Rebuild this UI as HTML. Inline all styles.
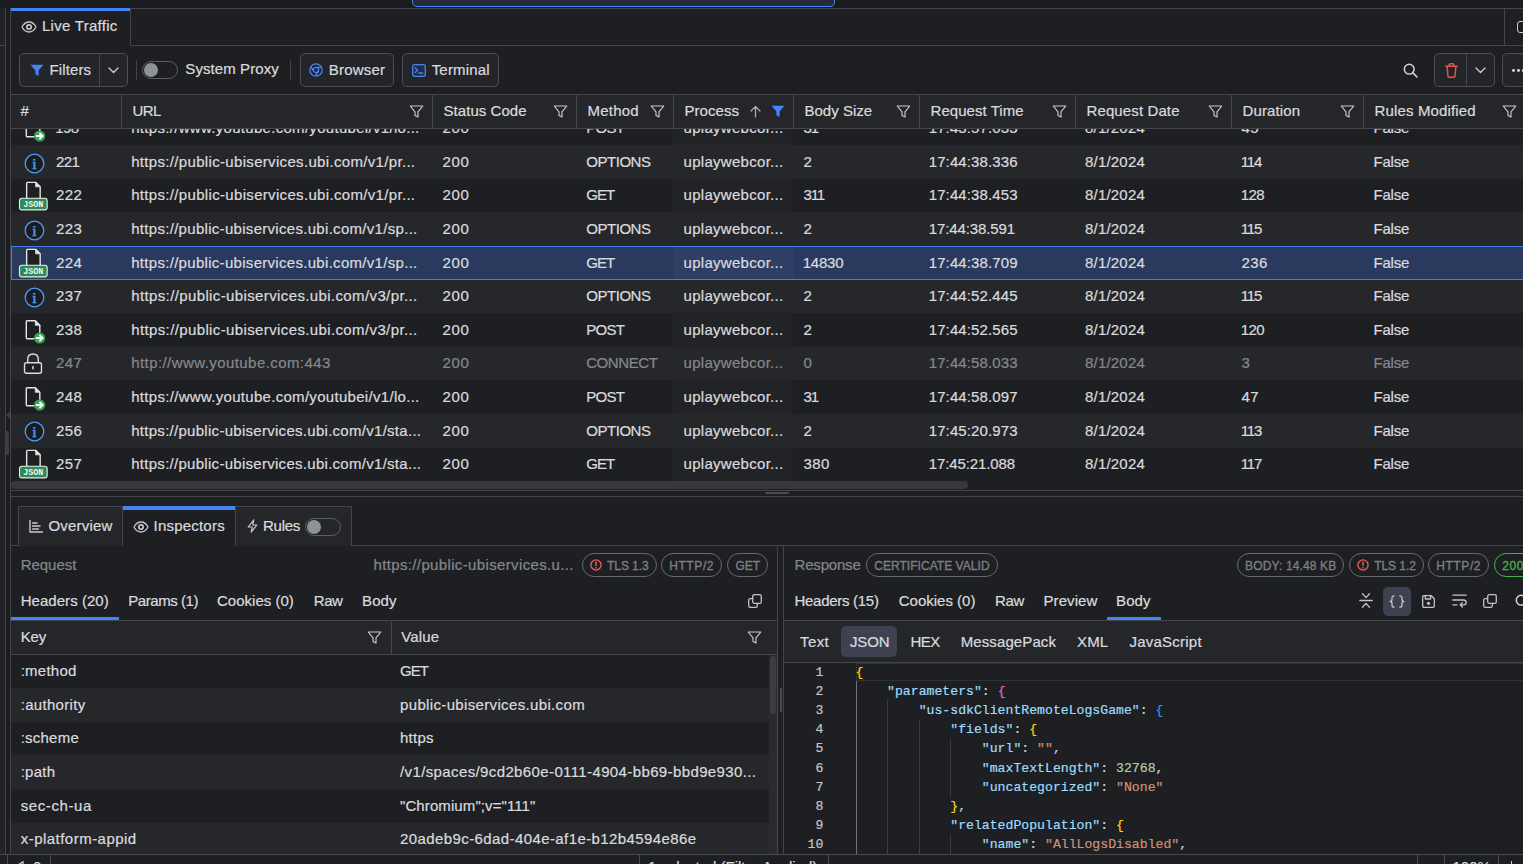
<!DOCTYPE html>
<html lang="en"><head><meta charset="utf-8"><title>Live Traffic</title><style>
html,body{margin:0;padding:0;background:#1e1f22;}
body{width:1523px;height:864px;overflow:hidden;position:relative;font-family:"Liberation Sans",sans-serif;font-size:15px;color:#d9dade;}
div{position:absolute;}
.t{white-space:nowrap;-webkit-text-stroke:0.22px currentColor;}
.m{white-space:pre;font-family:"Liberation Mono",monospace;font-size:13.17px;line-height:20px;color:#d4d4d4;-webkit-text-stroke:0.2px currentColor;}
svg{display:block;overflow:visible}
</style></head>
<body>
<div style="left:0px;top:0px;width:1523px;height:8px;background:#1b1c1f"></div>
<div style="left:412px;top:-6px;width:423px;height:12.5px;background:#262b3b;border:1.5px solid #4484f5;border-radius:0 0 5px 5px;box-sizing:border-box"></div>
<div style="left:0px;top:8px;width:5px;height:856px;background:#222327"></div>
<div style="left:4.5px;top:8px;width:1px;height:864px;background:#44454a"></div>
<div style="left:5.5px;top:8px;width:5px;height:864px;background:#1b1c1f"></div>
<div style="left:10px;top:8px;width:1px;height:864px;background:#44454a"></div>
<div style="left:0px;top:45px;width:5px;height:1px;background:#44454a"></div>
<div style="left:11px;top:8px;width:1523px;height:1px;background:#44454a"></div>
<div style="left:130px;top:45px;width:1523px;height:1px;background:#44454a"></div>
<div style="left:11px;top:8px;width:119px;height:2.6px;background:#4484f5"></div>
<div style="left:130px;top:8px;width:1px;height:38px;background:#44454a"></div>
<div style="left:20.8px;top:19px;line-height:0"><svg width="16" height="16" viewBox="0 0 16 16" ><path d="M1 8 C3 4.2 5.5 3 8 3 C10.5 3 13 4.2 15 8 C13 11.8 10.5 13 8 13 C5.5 13 3 11.8 1 8 Z" fill="none" stroke="#c3c4c8" stroke-width="1.3"/><circle cx="8" cy="8" r="2.2" fill="none" stroke="#c3c4c8" stroke-width="1.7"/></svg></div>
<div class="t" style="left:42px;top:16.00px;line-height:20px;font-size:15px;color:#d9dade;letter-spacing:0.278px;">Live Traffic</div>
<div style="left:1504px;top:9px;width:1px;height:36px;background:#44454a"></div>
<div style="left:1517.3px;top:20.6px;width:22px;height:12.8px;border:1.5px solid #c9cacd;border-radius:3px;box-sizing:border-box"></div>
<div style="left:19px;top:53px;width:109px;height:34px;border:1px solid #4d4f55;border-radius:5px;box-sizing:border-box;background:#242529"></div>
<div style="left:99px;top:54px;width:1px;height:32px;background:#44454a"></div>
<div style="left:29.6px;top:64px;line-height:0"><svg width="14" height="13" viewBox="0 0 14 13" ><path d="M0.5 0.8 H13.5 L8.6 6.6 V12 L5.4 10.2 V6.6 Z" fill="#4484f5"/></svg></div>
<div class="t" style="left:49.5px;top:59.50px;line-height:20px;font-size:15px;color:#d9dade;letter-spacing:0.108px;">Filters</div>
<div style="left:108px;top:67px;line-height:0"><svg width="11" height="7" viewBox="0 0 11 7" ><path d="M1 1 L5.5 5.5 L10 1" fill="none" stroke="#c9cacd" stroke-width="1.4" stroke-linecap="round" stroke-linejoin="round"/></svg></div>
<div style="left:136px;top:60px;width:1px;height:20px;background:#44454a"></div>
<div style="left:142px;top:61px;width:36px;height:18px;border:1px solid #5b5d64;border-radius:9px;box-sizing:border-box"></div>
<div style="left:144px;top:63px;width:14px;height:14px;background:#8f9198;border-radius:7px"></div>
<div class="t" style="left:185.3px;top:58.50px;line-height:20px;font-size:15px;color:#d9dade;letter-spacing:0.089px;">System Proxy</div>
<div style="left:290px;top:60px;width:1px;height:20px;background:#44454a"></div>
<div style="left:300px;top:53px;width:94px;height:34px;border:1px solid #4d4f55;border-radius:5px;box-sizing:border-box;background:#242529"></div>
<div style="left:309px;top:63px;line-height:0"><svg width="14" height="14" viewBox="0 0 14 14" ><circle cx="7" cy="7" r="6.2" fill="none" stroke="#4484f5" stroke-width="1.3"/><circle cx="7" cy="7" r="2.6" fill="none" stroke="#4484f5" stroke-width="1.3"/><path d="M7 4.4 H12.6 M4.75 8.3 L2 3.6 M9.25 8.3 L6.5 13" fill="none" stroke="#4484f5" stroke-width="1.3"/></svg></div>
<div class="t" style="left:328.7px;top:59.50px;line-height:20px;font-size:15px;color:#d9dade;letter-spacing:0.226px;">Browser</div>
<div style="left:402px;top:53px;width:97px;height:34px;border:1px solid #4d4f55;border-radius:5px;box-sizing:border-box;background:#242529"></div>
<div style="left:412px;top:63.5px;line-height:0"><svg width="14" height="13" viewBox="0 0 14 13" ><rect x="0.7" y="0.7" width="12.6" height="11.6" rx="2" fill="#222c47" stroke="#4484f5" stroke-width="1.3"/><path d="M3.2 4 L5.6 6.2 L3.2 8.4 M6.8 9 H10.6" fill="none" stroke="#4484f5" stroke-width="1.3" stroke-linecap="round" stroke-linejoin="round"/></svg></div>
<div class="t" style="left:431.7px;top:59.50px;line-height:20px;font-size:15px;color:#d9dade;letter-spacing:0.177px;">Terminal</div>
<div style="left:1402.6px;top:62.6px;line-height:0"><svg width="15" height="15" viewBox="0 0 15 15" ><circle cx="6.2" cy="6.2" r="4.9" fill="none" stroke="#d5d6d9" stroke-width="1.5"/><path d="M9.9 9.9 L14 14" stroke="#d5d6d9" stroke-width="1.6" stroke-linecap="round"/></svg></div>
<div style="left:1434px;top:53px;width:61px;height:34px;border:1px solid #4d4f55;border-radius:5px;box-sizing:border-box;background:#242529"></div>
<div style="left:1466px;top:54px;width:1px;height:32px;background:#44454a"></div>
<div style="left:1445px;top:63px;line-height:0"><svg width="13" height="15" viewBox="0 0 13 15" ><path d="M0.8 3.2 H12.2 M4.3 3 V1.6 Q4.3 0.8 5.1 0.8 H7.9 Q8.7 0.8 8.7 1.6 V3 M2.2 3.4 L2.9 13 Q3 14.2 4.1 14.2 H8.9 Q10 14.2 10.1 13 L10.8 3.4" fill="none" stroke="#e5534b" stroke-width="1.5" stroke-linecap="round" stroke-linejoin="round"/></svg></div>
<div style="left:1474.5px;top:66.5px;line-height:0"><svg width="11" height="7" viewBox="0 0 11 7" ><path d="M1 1 L5.5 5.5 L10 1" fill="none" stroke="#c9cacd" stroke-width="1.4" stroke-linecap="round" stroke-linejoin="round"/></svg></div>
<div style="left:1502px;top:53px;width:40px;height:34px;border:1px solid #4d4f55;border-radius:5px;box-sizing:border-box;background:#242529"></div>
<div style="left:1512.3px;top:68.7px;width:2.9px;height:2.9px;background:#d5d6d9;border-radius:50%"></div>
<div style="left:1516.8999999999999px;top:68.7px;width:2.9px;height:2.9px;background:#d5d6d9;border-radius:50%"></div>
<div style="left:1521.5px;top:68.7px;width:2.9px;height:2.9px;background:#d5d6d9;border-radius:50%"></div>
<div style="left:11px;top:94px;width:1523px;height:34px;background:#25262a"></div>
<div style="left:11px;top:94px;width:1523px;height:1px;background:#45464b"></div>
<div style="left:11px;top:128px;width:1523px;height:1px;background:#45464b"></div>
<div style="left:11px;top:128.5px;width:1523px;height:352px;overflow:hidden"><div style="left:-11px;top:-128.5px;width:1523px;height:900px">
<div style="left:11px;top:111.6px;width:1523px;height:33.6px;background:#1e1f22"></div>
<div style="left:673px;top:111.6px;width:120px;height:33.6px;background:#222327"></div>
<div style="left:24.7px;top:118.2px;line-height:0"><svg width="24" height="26" viewBox="0 0 24 26" ><path d="M1.3 1.6 Q1.3 0.8 2.1 0.8 H10.3 L14.8 5.3 V17.8 Q14.8 18.8 13.8 18.8 H2.1 Q1.3 18.8 1.3 17.8 Z" fill="#1f1f20" stroke="#e4e4e4" stroke-width="1.4" stroke-linejoin="round"/><path d="M10.3 0.8 V5.3 H14.8 Z" fill="#e4e4e4" stroke="#e4e4e4" stroke-width="0.8" stroke-linejoin="round"/><circle cx="14.6" cy="18" r="5.6" fill="#35a853"/><path d="M11.6 18 H17.2 M15 15.5 L17.6 18 L15 20.5" fill="none" stroke="#fff" stroke-width="1.9" stroke-linecap="round" stroke-linejoin="round"/></svg></div>
<div class="t" style="left:55.2px;top:118.20px;line-height:20px;font-size:15px;color:#d9dade;letter-spacing:-0.577px;">198</div>
<div class="t" style="left:131.2px;top:118.20px;line-height:20px;font-size:15px;color:#d9dade;letter-spacing:0.303px;">https://www.youtube.com/youtubei/v1/lo...</div>
<div class="t" style="left:442.5px;top:118.20px;line-height:20px;font-size:15px;color:#d9dade;letter-spacing:0.606px;">200</div>
<div class="t" style="left:586.2px;top:118.20px;line-height:20px;font-size:15px;color:#d9dade;letter-spacing:-0.686px;">POST</div>
<div class="t" style="left:683.5px;top:118.20px;line-height:20px;font-size:15px;color:#d9dade;letter-spacing:0.294px;">uplaywebcor...</div>
<div class="t" style="left:803.5px;top:118.20px;line-height:20px;font-size:15px;color:#d9dade;letter-spacing:-1.044px;">31</div>
<div class="t" style="left:928.7px;top:118.20px;line-height:20px;font-size:15px;color:#d9dade;letter-spacing:0.117px;">17:43:57.033</div>
<div class="t" style="left:1085px;top:118.20px;line-height:20px;font-size:15px;color:#d9dade;letter-spacing:0.201px;">8/1/2024</div>
<div class="t" style="left:1241.5px;top:118.20px;line-height:20px;font-size:15px;color:#d9dade;letter-spacing:0.356px;">45</div>
<div class="t" style="left:1373.5px;top:118.20px;line-height:20px;font-size:15px;color:#d9dade;letter-spacing:-0.217px;">False</div>
<div style="left:11px;top:145.2px;width:1523px;height:33.6px;background:#26272b"></div>
<div style="left:673px;top:145.2px;width:120px;height:33.6px;background:#26272b"></div>
<div style="left:23.6px;top:152.5px;line-height:0"><svg width="21" height="21" viewBox="0 0 21 21" ><circle cx="10.5" cy="10.5" r="9.3" fill="#1c1c1e" stroke="#4a9df8" stroke-width="1.3"/><text x="10.5" y="15.6" text-anchor="middle" font-family="Liberation Serif, DejaVu Serif, serif" font-size="15.5" fill="#4a9df8" stroke="#4a9df8" stroke-width="0.55">i</text></svg></div>
<div class="t" style="left:56px;top:151.80px;line-height:20px;font-size:15px;color:#d9dade;letter-spacing:-0.577px;">221</div>
<div class="t" style="left:131.2px;top:151.80px;line-height:20px;font-size:15px;color:#d9dade;letter-spacing:0.327px;">https://public-ubiservices.ubi.com/v1/pr...</div>
<div class="t" style="left:442.5px;top:151.80px;line-height:20px;font-size:15px;color:#d9dade;letter-spacing:0.606px;">200</div>
<div class="t" style="left:586.2px;top:151.80px;line-height:20px;font-size:15px;color:#d9dade;letter-spacing:-0.452px;">OPTIONS</div>
<div class="t" style="left:683.5px;top:151.80px;line-height:20px;font-size:15px;color:#d9dade;letter-spacing:0.294px;">uplaywebcor...</div>
<div class="t" style="left:803.5px;top:151.80px;line-height:20px;font-size:15px;color:#d9dade;letter-spacing:0.356px;">2</div>
<div class="t" style="left:928.7px;top:151.80px;line-height:20px;font-size:15px;color:#d9dade;letter-spacing:0.117px;">17:44:38.336</div>
<div class="t" style="left:1085px;top:151.80px;line-height:20px;font-size:15px;color:#d9dade;letter-spacing:0.201px;">8/1/2024</div>
<div class="t" style="left:1240.7px;top:151.80px;line-height:20px;font-size:15px;color:#d9dade;letter-spacing:-1.141px;">114</div>
<div class="t" style="left:1373.5px;top:151.80px;line-height:20px;font-size:15px;color:#d9dade;letter-spacing:-0.217px;">False</div>
<div style="left:11px;top:178.8px;width:1523px;height:33.6px;background:#1e1f22"></div>
<div style="left:673px;top:178.8px;width:120px;height:33.6px;background:#222327"></div>
<div style="left:18.3px;top:180.6px;line-height:0"><svg width="31" height="31" viewBox="0 0 31 31" ><path d="M8.65 2.15 Q8.65 1.35 9.450000000000001 1.35 H17.65 L22.15 5.85 V18.35 Q22.15 19.35 21.15 19.35 H9.450000000000001 Q8.65 19.35 8.65 18.35 Z" fill="#1f1f20" stroke="#e4e4e4" stroke-width="1.4" stroke-linejoin="round"/><path d="M17.65 1.35 V5.85 H22.15 Z" fill="#e4e4e4" stroke="#e4e4e4" stroke-width="0.8" stroke-linejoin="round"/><rect x="1.5" y="17.25" width="27.65" height="11.6" rx="2.4" fill="#2e8b57" stroke="#e9efe9" stroke-width="1.1"/><text x="15.3" y="25.7" text-anchor="middle" font-family="Liberation Mono, DejaVu Sans Mono, monospace" font-weight="bold" font-size="8.4" fill="#f4f4f4">JSON</text></svg></div>
<div class="t" style="left:56px;top:185.40px;line-height:20px;font-size:15px;color:#d9dade;letter-spacing:0.356px;">222</div>
<div class="t" style="left:131.2px;top:185.40px;line-height:20px;font-size:15px;color:#d9dade;letter-spacing:0.327px;">https://public-ubiservices.ubi.com/v1/pr...</div>
<div class="t" style="left:442.5px;top:185.40px;line-height:20px;font-size:15px;color:#d9dade;letter-spacing:0.606px;">200</div>
<div class="t" style="left:586.2px;top:185.40px;line-height:20px;font-size:15px;color:#d9dade;letter-spacing:-0.915px;">GET</div>
<div class="t" style="left:683.5px;top:185.40px;line-height:20px;font-size:15px;color:#d9dade;letter-spacing:0.294px;">uplaywebcor...</div>
<div class="t" style="left:803.5px;top:185.40px;line-height:20px;font-size:15px;color:#d9dade;letter-spacing:-1.141px;">311</div>
<div class="t" style="left:928.7px;top:185.40px;line-height:20px;font-size:15px;color:#d9dade;letter-spacing:0.117px;">17:44:38.453</div>
<div class="t" style="left:1085px;top:185.40px;line-height:20px;font-size:15px;color:#d9dade;letter-spacing:0.201px;">8/1/2024</div>
<div class="t" style="left:1240.7px;top:185.40px;line-height:20px;font-size:15px;color:#d9dade;letter-spacing:-0.577px;">128</div>
<div class="t" style="left:1373.5px;top:185.40px;line-height:20px;font-size:15px;color:#d9dade;letter-spacing:-0.217px;">False</div>
<div style="left:11px;top:212.4px;width:1523px;height:33.6px;background:#26272b"></div>
<div style="left:673px;top:212.4px;width:120px;height:33.6px;background:#26272b"></div>
<div style="left:23.6px;top:219.7px;line-height:0"><svg width="21" height="21" viewBox="0 0 21 21" ><circle cx="10.5" cy="10.5" r="9.3" fill="#1c1c1e" stroke="#4a9df8" stroke-width="1.3"/><text x="10.5" y="15.6" text-anchor="middle" font-family="Liberation Serif, DejaVu Serif, serif" font-size="15.5" fill="#4a9df8" stroke="#4a9df8" stroke-width="0.55">i</text></svg></div>
<div class="t" style="left:56px;top:219.00px;line-height:20px;font-size:15px;color:#d9dade;letter-spacing:0.356px;">223</div>
<div class="t" style="left:131.2px;top:219.00px;line-height:20px;font-size:15px;color:#d9dade;letter-spacing:0.301px;">https://public-ubiservices.ubi.com/v1/sp...</div>
<div class="t" style="left:442.5px;top:219.00px;line-height:20px;font-size:15px;color:#d9dade;letter-spacing:0.606px;">200</div>
<div class="t" style="left:586.2px;top:219.00px;line-height:20px;font-size:15px;color:#d9dade;letter-spacing:-0.452px;">OPTIONS</div>
<div class="t" style="left:683.5px;top:219.00px;line-height:20px;font-size:15px;color:#d9dade;letter-spacing:0.294px;">uplaywebcor...</div>
<div class="t" style="left:803.5px;top:219.00px;line-height:20px;font-size:15px;color:#d9dade;letter-spacing:0.356px;">2</div>
<div class="t" style="left:928.7px;top:219.00px;line-height:20px;font-size:15px;color:#d9dade;letter-spacing:-0.116px;">17:44:38.591</div>
<div class="t" style="left:1085px;top:219.00px;line-height:20px;font-size:15px;color:#d9dade;letter-spacing:0.201px;">8/1/2024</div>
<div class="t" style="left:1240.7px;top:219.00px;line-height:20px;font-size:15px;color:#d9dade;letter-spacing:-1.141px;">115</div>
<div class="t" style="left:1373.5px;top:219.00px;line-height:20px;font-size:15px;color:#d9dade;letter-spacing:-0.217px;">False</div>
<div style="left:11px;top:246.0px;width:1523px;height:33.6px;background:#2a3a5f"></div>
<div style="left:673px;top:246.0px;width:120px;height:33.6px;background:#2e3e64"></div>
<div style="left:11px;top:246px;width:1523px;height:1px;background:#3f7fe8"></div>
<div style="left:11px;top:279px;width:1523px;height:1px;background:#3f7fe8"></div>
<div style="left:11px;top:246px;width:1px;height:34px;background:#3f7fe8"></div>
<div style="left:18.3px;top:247.8px;line-height:0"><svg width="31" height="31" viewBox="0 0 31 31" ><path d="M8.65 2.15 Q8.65 1.35 9.450000000000001 1.35 H17.65 L22.15 5.85 V18.35 Q22.15 19.35 21.15 19.35 H9.450000000000001 Q8.65 19.35 8.65 18.35 Z" fill="#1f1f20" stroke="#e4e4e4" stroke-width="1.4" stroke-linejoin="round"/><path d="M17.65 1.35 V5.85 H22.15 Z" fill="#e4e4e4" stroke="#e4e4e4" stroke-width="0.8" stroke-linejoin="round"/><rect x="1.5" y="17.25" width="27.65" height="11.6" rx="2.4" fill="#2e8b57" stroke="#e9efe9" stroke-width="1.1"/><text x="15.3" y="25.7" text-anchor="middle" font-family="Liberation Mono, DejaVu Sans Mono, monospace" font-weight="bold" font-size="8.4" fill="#f4f4f4">JSON</text></svg></div>
<div class="t" style="left:56px;top:252.60px;line-height:20px;font-size:15px;color:#d9dade;letter-spacing:0.356px;">224</div>
<div class="t" style="left:131.2px;top:252.60px;line-height:20px;font-size:15px;color:#d9dade;letter-spacing:0.301px;">https://public-ubiservices.ubi.com/v1/sp...</div>
<div class="t" style="left:442.5px;top:252.60px;line-height:20px;font-size:15px;color:#d9dade;letter-spacing:0.606px;">200</div>
<div class="t" style="left:586.2px;top:252.60px;line-height:20px;font-size:15px;color:#d9dade;letter-spacing:-0.915px;">GET</div>
<div class="t" style="left:683.5px;top:252.60px;line-height:20px;font-size:15px;color:#d9dade;letter-spacing:0.294px;">uplaywebcor...</div>
<div class="t" style="left:802.7px;top:252.60px;line-height:20px;font-size:15px;color:#d9dade;letter-spacing:-0.204px;">14830</div>
<div class="t" style="left:928.7px;top:252.60px;line-height:20px;font-size:15px;color:#d9dade;letter-spacing:0.117px;">17:44:38.709</div>
<div class="t" style="left:1085px;top:252.60px;line-height:20px;font-size:15px;color:#d9dade;letter-spacing:0.201px;">8/1/2024</div>
<div class="t" style="left:1241.5px;top:252.60px;line-height:20px;font-size:15px;color:#d9dade;letter-spacing:0.356px;">236</div>
<div class="t" style="left:1373.5px;top:252.60px;line-height:20px;font-size:15px;color:#d9dade;letter-spacing:-0.217px;">False</div>
<div style="left:11px;top:279.6px;width:1523px;height:33.6px;background:#26272b"></div>
<div style="left:673px;top:279.6px;width:120px;height:33.6px;background:#26272b"></div>
<div style="left:23.6px;top:286.9px;line-height:0"><svg width="21" height="21" viewBox="0 0 21 21" ><circle cx="10.5" cy="10.5" r="9.3" fill="#1c1c1e" stroke="#4a9df8" stroke-width="1.3"/><text x="10.5" y="15.6" text-anchor="middle" font-family="Liberation Serif, DejaVu Serif, serif" font-size="15.5" fill="#4a9df8" stroke="#4a9df8" stroke-width="0.55">i</text></svg></div>
<div class="t" style="left:56px;top:286.20px;line-height:20px;font-size:15px;color:#d9dade;letter-spacing:0.356px;">237</div>
<div class="t" style="left:131.2px;top:286.20px;line-height:20px;font-size:15px;color:#d9dade;letter-spacing:0.378px;">https://public-ubiservices.ubi.com/v3/pr...</div>
<div class="t" style="left:442.5px;top:286.20px;line-height:20px;font-size:15px;color:#d9dade;letter-spacing:0.606px;">200</div>
<div class="t" style="left:586.2px;top:286.20px;line-height:20px;font-size:15px;color:#d9dade;letter-spacing:-0.452px;">OPTIONS</div>
<div class="t" style="left:683.5px;top:286.20px;line-height:20px;font-size:15px;color:#d9dade;letter-spacing:0.294px;">uplaywebcor...</div>
<div class="t" style="left:803.5px;top:286.20px;line-height:20px;font-size:15px;color:#d9dade;letter-spacing:0.356px;">2</div>
<div class="t" style="left:928.7px;top:286.20px;line-height:20px;font-size:15px;color:#d9dade;letter-spacing:0.117px;">17:44:52.445</div>
<div class="t" style="left:1085px;top:286.20px;line-height:20px;font-size:15px;color:#d9dade;letter-spacing:0.201px;">8/1/2024</div>
<div class="t" style="left:1240.7px;top:286.20px;line-height:20px;font-size:15px;color:#d9dade;letter-spacing:-1.141px;">115</div>
<div class="t" style="left:1373.5px;top:286.20px;line-height:20px;font-size:15px;color:#d9dade;letter-spacing:-0.217px;">False</div>
<div style="left:11px;top:313.2px;width:1523px;height:33.6px;background:#1e1f22"></div>
<div style="left:673px;top:313.2px;width:120px;height:33.6px;background:#222327"></div>
<div style="left:24.7px;top:319.8px;line-height:0"><svg width="24" height="26" viewBox="0 0 24 26" ><path d="M1.3 1.6 Q1.3 0.8 2.1 0.8 H10.3 L14.8 5.3 V17.8 Q14.8 18.8 13.8 18.8 H2.1 Q1.3 18.8 1.3 17.8 Z" fill="#1f1f20" stroke="#e4e4e4" stroke-width="1.4" stroke-linejoin="round"/><path d="M10.3 0.8 V5.3 H14.8 Z" fill="#e4e4e4" stroke="#e4e4e4" stroke-width="0.8" stroke-linejoin="round"/><circle cx="14.6" cy="18" r="5.6" fill="#35a853"/><path d="M11.6 18 H17.2 M15 15.5 L17.6 18 L15 20.5" fill="none" stroke="#fff" stroke-width="1.9" stroke-linecap="round" stroke-linejoin="round"/></svg></div>
<div class="t" style="left:56px;top:319.80px;line-height:20px;font-size:15px;color:#d9dade;letter-spacing:0.356px;">238</div>
<div class="t" style="left:131.2px;top:319.80px;line-height:20px;font-size:15px;color:#d9dade;letter-spacing:0.378px;">https://public-ubiservices.ubi.com/v3/pr...</div>
<div class="t" style="left:442.5px;top:319.80px;line-height:20px;font-size:15px;color:#d9dade;letter-spacing:0.606px;">200</div>
<div class="t" style="left:586.2px;top:319.80px;line-height:20px;font-size:15px;color:#d9dade;letter-spacing:-0.686px;">POST</div>
<div class="t" style="left:683.5px;top:319.80px;line-height:20px;font-size:15px;color:#d9dade;letter-spacing:0.294px;">uplaywebcor...</div>
<div class="t" style="left:803.5px;top:319.80px;line-height:20px;font-size:15px;color:#d9dade;letter-spacing:0.356px;">2</div>
<div class="t" style="left:928.7px;top:319.80px;line-height:20px;font-size:15px;color:#d9dade;letter-spacing:0.117px;">17:44:52.565</div>
<div class="t" style="left:1085px;top:319.80px;line-height:20px;font-size:15px;color:#d9dade;letter-spacing:0.201px;">8/1/2024</div>
<div class="t" style="left:1240.7px;top:319.80px;line-height:20px;font-size:15px;color:#d9dade;letter-spacing:-0.577px;">120</div>
<div class="t" style="left:1373.5px;top:319.80px;line-height:20px;font-size:15px;color:#d9dade;letter-spacing:-0.217px;">False</div>
<div style="left:11px;top:346.8px;width:1523px;height:33.6px;background:#26272b"></div>
<div style="left:673px;top:346.8px;width:120px;height:33.6px;background:#26272b"></div>
<div style="left:23px;top:353.4px;line-height:0"><svg width="20" height="22" viewBox="0 0 20 22" ><path d="M4.7 9.6 V6.6 Q4.7 1 10 1 Q15.3 1 15.3 6.6 V9.6" fill="none" stroke="#dcdcdc" stroke-width="1.4"/><rect x="1.55" y="9.8" width="16.9" height="10.4" rx="1.8" fill="#1f1f20" stroke="#dcdcdc" stroke-width="1.4"/><rect x="9.25" y="13" width="1.5" height="3.4" fill="#dcdcdc"/></svg></div>
<div class="t" style="left:56px;top:353.40px;line-height:20px;font-size:15px;color:#85878d;letter-spacing:0.356px;">247</div>
<div class="t" style="left:131.2px;top:353.40px;line-height:20px;font-size:15px;color:#85878d;letter-spacing:0.429px;">http://www.youtube.com:443</div>
<div class="t" style="left:442.5px;top:353.40px;line-height:20px;font-size:15px;color:#85878d;letter-spacing:0.606px;">200</div>
<div class="t" style="left:586.2px;top:353.40px;line-height:20px;font-size:15px;color:#85878d;letter-spacing:-0.41px;">CONNECT</div>
<div class="t" style="left:683.5px;top:353.40px;line-height:20px;font-size:15px;color:#85878d;letter-spacing:0.294px;">uplaywebcor...</div>
<div class="t" style="left:803.5px;top:353.40px;line-height:20px;font-size:15px;color:#85878d;letter-spacing:0.356px;">0</div>
<div class="t" style="left:928.7px;top:353.40px;line-height:20px;font-size:15px;color:#85878d;letter-spacing:0.117px;">17:44:58.033</div>
<div class="t" style="left:1085px;top:353.40px;line-height:20px;font-size:15px;color:#85878d;letter-spacing:0.201px;">8/1/2024</div>
<div class="t" style="left:1241.5px;top:353.40px;line-height:20px;font-size:15px;color:#85878d;letter-spacing:0.356px;">3</div>
<div class="t" style="left:1373.5px;top:353.40px;line-height:20px;font-size:15px;color:#85878d;letter-spacing:-0.217px;">False</div>
<div style="left:11px;top:380.4px;width:1523px;height:33.6px;background:#1e1f22"></div>
<div style="left:673px;top:380.4px;width:120px;height:33.6px;background:#222327"></div>
<div style="left:24.7px;top:387.0px;line-height:0"><svg width="24" height="26" viewBox="0 0 24 26" ><path d="M1.3 1.6 Q1.3 0.8 2.1 0.8 H10.3 L14.8 5.3 V17.8 Q14.8 18.8 13.8 18.8 H2.1 Q1.3 18.8 1.3 17.8 Z" fill="#1f1f20" stroke="#e4e4e4" stroke-width="1.4" stroke-linejoin="round"/><path d="M10.3 0.8 V5.3 H14.8 Z" fill="#e4e4e4" stroke="#e4e4e4" stroke-width="0.8" stroke-linejoin="round"/><circle cx="14.6" cy="18" r="5.6" fill="#35a853"/><path d="M11.6 18 H17.2 M15 15.5 L17.6 18 L15 20.5" fill="none" stroke="#fff" stroke-width="1.9" stroke-linecap="round" stroke-linejoin="round"/></svg></div>
<div class="t" style="left:56px;top:387.00px;line-height:20px;font-size:15px;color:#d9dade;letter-spacing:0.356px;">248</div>
<div class="t" style="left:131.2px;top:387.00px;line-height:20px;font-size:15px;color:#d9dade;letter-spacing:0.303px;">https://www.youtube.com/youtubei/v1/lo...</div>
<div class="t" style="left:442.5px;top:387.00px;line-height:20px;font-size:15px;color:#d9dade;letter-spacing:0.606px;">200</div>
<div class="t" style="left:586.2px;top:387.00px;line-height:20px;font-size:15px;color:#d9dade;letter-spacing:-0.686px;">POST</div>
<div class="t" style="left:683.5px;top:387.00px;line-height:20px;font-size:15px;color:#d9dade;letter-spacing:0.294px;">uplaywebcor...</div>
<div class="t" style="left:803.5px;top:387.00px;line-height:20px;font-size:15px;color:#d9dade;letter-spacing:-1.044px;">31</div>
<div class="t" style="left:928.7px;top:387.00px;line-height:20px;font-size:15px;color:#d9dade;letter-spacing:0.117px;">17:44:58.097</div>
<div class="t" style="left:1085px;top:387.00px;line-height:20px;font-size:15px;color:#d9dade;letter-spacing:0.201px;">8/1/2024</div>
<div class="t" style="left:1241.5px;top:387.00px;line-height:20px;font-size:15px;color:#d9dade;letter-spacing:0.356px;">47</div>
<div class="t" style="left:1373.5px;top:387.00px;line-height:20px;font-size:15px;color:#d9dade;letter-spacing:-0.217px;">False</div>
<div style="left:11px;top:414.0px;width:1523px;height:33.6px;background:#26272b"></div>
<div style="left:673px;top:414.0px;width:120px;height:33.6px;background:#26272b"></div>
<div style="left:23.6px;top:421.3px;line-height:0"><svg width="21" height="21" viewBox="0 0 21 21" ><circle cx="10.5" cy="10.5" r="9.3" fill="#1c1c1e" stroke="#4a9df8" stroke-width="1.3"/><text x="10.5" y="15.6" text-anchor="middle" font-family="Liberation Serif, DejaVu Serif, serif" font-size="15.5" fill="#4a9df8" stroke="#4a9df8" stroke-width="0.55">i</text></svg></div>
<div class="t" style="left:56px;top:420.60px;line-height:20px;font-size:15px;color:#d9dade;letter-spacing:0.356px;">256</div>
<div class="t" style="left:131.2px;top:420.60px;line-height:20px;font-size:15px;color:#d9dade;letter-spacing:0.284px;">https://public-ubiservices.ubi.com/v1/sta...</div>
<div class="t" style="left:442.5px;top:420.60px;line-height:20px;font-size:15px;color:#d9dade;letter-spacing:0.606px;">200</div>
<div class="t" style="left:586.2px;top:420.60px;line-height:20px;font-size:15px;color:#d9dade;letter-spacing:-0.452px;">OPTIONS</div>
<div class="t" style="left:683.5px;top:420.60px;line-height:20px;font-size:15px;color:#d9dade;letter-spacing:0.294px;">uplaywebcor...</div>
<div class="t" style="left:803.5px;top:420.60px;line-height:20px;font-size:15px;color:#d9dade;letter-spacing:0.356px;">2</div>
<div class="t" style="left:928.7px;top:420.60px;line-height:20px;font-size:15px;color:#d9dade;letter-spacing:0.117px;">17:45:20.973</div>
<div class="t" style="left:1085px;top:420.60px;line-height:20px;font-size:15px;color:#d9dade;letter-spacing:0.201px;">8/1/2024</div>
<div class="t" style="left:1240.7px;top:420.60px;line-height:20px;font-size:15px;color:#d9dade;letter-spacing:-1.141px;">113</div>
<div class="t" style="left:1373.5px;top:420.60px;line-height:20px;font-size:15px;color:#d9dade;letter-spacing:-0.217px;">False</div>
<div style="left:11px;top:447.6px;width:1523px;height:33.6px;background:#1e1f22"></div>
<div style="left:673px;top:447.6px;width:120px;height:33.6px;background:#222327"></div>
<div style="left:18.3px;top:449.4px;line-height:0"><svg width="31" height="31" viewBox="0 0 31 31" ><path d="M8.65 2.15 Q8.65 1.35 9.450000000000001 1.35 H17.65 L22.15 5.85 V18.35 Q22.15 19.35 21.15 19.35 H9.450000000000001 Q8.65 19.35 8.65 18.35 Z" fill="#1f1f20" stroke="#e4e4e4" stroke-width="1.4" stroke-linejoin="round"/><path d="M17.65 1.35 V5.85 H22.15 Z" fill="#e4e4e4" stroke="#e4e4e4" stroke-width="0.8" stroke-linejoin="round"/><rect x="1.5" y="17.25" width="27.65" height="11.6" rx="2.4" fill="#2e8b57" stroke="#e9efe9" stroke-width="1.1"/><text x="15.3" y="25.7" text-anchor="middle" font-family="Liberation Mono, DejaVu Sans Mono, monospace" font-weight="bold" font-size="8.4" fill="#f4f4f4">JSON</text></svg></div>
<div class="t" style="left:56px;top:454.20px;line-height:20px;font-size:15px;color:#d9dade;letter-spacing:0.356px;">257</div>
<div class="t" style="left:131.2px;top:454.20px;line-height:20px;font-size:15px;color:#d9dade;letter-spacing:0.284px;">https://public-ubiservices.ubi.com/v1/sta...</div>
<div class="t" style="left:442.5px;top:454.20px;line-height:20px;font-size:15px;color:#d9dade;letter-spacing:0.606px;">200</div>
<div class="t" style="left:586.2px;top:454.20px;line-height:20px;font-size:15px;color:#d9dade;letter-spacing:-0.915px;">GET</div>
<div class="t" style="left:683.5px;top:454.20px;line-height:20px;font-size:15px;color:#d9dade;letter-spacing:0.294px;">uplaywebcor...</div>
<div class="t" style="left:803.5px;top:454.20px;line-height:20px;font-size:15px;color:#d9dade;letter-spacing:0.356px;">380</div>
<div class="t" style="left:928.7px;top:454.20px;line-height:20px;font-size:15px;color:#d9dade;letter-spacing:-0.116px;">17:45:21.088</div>
<div class="t" style="left:1085px;top:454.20px;line-height:20px;font-size:15px;color:#d9dade;letter-spacing:0.201px;">8/1/2024</div>
<div class="t" style="left:1240.7px;top:454.20px;line-height:20px;font-size:15px;color:#d9dade;letter-spacing:-1.141px;">117</div>
<div class="t" style="left:1373.5px;top:454.20px;line-height:20px;font-size:15px;color:#d9dade;letter-spacing:-0.217px;">False</div>
</div></div>
<div class="t" style="left:20.5px;top:101.20px;line-height:20px;font-size:15px;color:#d9dade;">#</div>
<div style="left:121px;top:95px;width:1px;height:33px;background:#45464b"></div>
<div class="t" style="left:132.5px;top:101.20px;line-height:20px;font-size:15px;color:#d9dade;letter-spacing:-0.639px;">URL</div>
<div style="left:409.0px;top:105px;line-height:0"><svg width="15" height="13" viewBox="0 0 15 13" ><path d="M1.2 1 H13.8 L9 6.8 V12 L6 10.4 V6.8 Z" fill="none" stroke="#c9cace" stroke-width="1.15" stroke-linejoin="round"/></svg></div>
<div style="left:432px;top:95px;width:1px;height:33px;background:#45464b"></div>
<div class="t" style="left:443.5px;top:101.20px;line-height:20px;font-size:15px;color:#d9dade;letter-spacing:0.049px;">Status Code</div>
<div style="left:553.0px;top:105px;line-height:0"><svg width="15" height="13" viewBox="0 0 15 13" ><path d="M1.2 1 H13.8 L9 6.8 V12 L6 10.4 V6.8 Z" fill="none" stroke="#c9cace" stroke-width="1.15" stroke-linejoin="round"/></svg></div>
<div style="left:576px;top:95px;width:1px;height:33px;background:#45464b"></div>
<div class="t" style="left:587.5px;top:101.20px;line-height:20px;font-size:15px;color:#d9dade;letter-spacing:0.217px;">Method</div>
<div style="left:650.0px;top:105px;line-height:0"><svg width="15" height="13" viewBox="0 0 15 13" ><path d="M1.2 1 H13.8 L9 6.8 V12 L6 10.4 V6.8 Z" fill="none" stroke="#c9cace" stroke-width="1.15" stroke-linejoin="round"/></svg></div>
<div style="left:673px;top:95px;width:1px;height:33px;background:#45464b"></div>
<div class="t" style="left:684.5px;top:101.20px;line-height:20px;font-size:15px;color:#d9dade;letter-spacing:0.059px;">Process</div>
<div style="left:749.5px;top:105px;line-height:0"><svg width="11" height="13" viewBox="0 0 11 13" ><path d="M5.5 12 V1.5 M1 6 L5.5 1.5 L10 6" fill="none" stroke="#a9aaae" stroke-width="1.3" stroke-linecap="round" stroke-linejoin="round"/></svg></div>
<div style="left:771px;top:105px;line-height:0"><svg width="14" height="13" viewBox="0 0 14 13" ><path d="M0.5 0.8 H13.5 L8.6 6.6 V12 L5.4 10.2 V6.6 Z" fill="#4484f5"/></svg></div>
<div style="left:793px;top:95px;width:1px;height:33px;background:#45464b"></div>
<div class="t" style="left:804.5px;top:101.20px;line-height:20px;font-size:15px;color:#d9dade;letter-spacing:0.006px;">Body Size</div>
<div style="left:896.0px;top:105px;line-height:0"><svg width="15" height="13" viewBox="0 0 15 13" ><path d="M1.2 1 H13.8 L9 6.8 V12 L6 10.4 V6.8 Z" fill="none" stroke="#c9cace" stroke-width="1.15" stroke-linejoin="round"/></svg></div>
<div style="left:919px;top:95px;width:1px;height:33px;background:#45464b"></div>
<div class="t" style="left:930.5px;top:101.20px;line-height:20px;font-size:15px;color:#d9dade;letter-spacing:0.046px;">Request Time</div>
<div style="left:1052.0px;top:105px;line-height:0"><svg width="15" height="13" viewBox="0 0 15 13" ><path d="M1.2 1 H13.8 L9 6.8 V12 L6 10.4 V6.8 Z" fill="none" stroke="#c9cace" stroke-width="1.15" stroke-linejoin="round"/></svg></div>
<div style="left:1075px;top:95px;width:1px;height:33px;background:#45464b"></div>
<div class="t" style="left:1086.5px;top:101.20px;line-height:20px;font-size:15px;color:#d9dade;letter-spacing:0.114px;">Request Date</div>
<div style="left:1208.0px;top:105px;line-height:0"><svg width="15" height="13" viewBox="0 0 15 13" ><path d="M1.2 1 H13.8 L9 6.8 V12 L6 10.4 V6.8 Z" fill="none" stroke="#c9cace" stroke-width="1.15" stroke-linejoin="round"/></svg></div>
<div style="left:1231px;top:95px;width:1px;height:33px;background:#45464b"></div>
<div class="t" style="left:1242.5px;top:101.20px;line-height:20px;font-size:15px;color:#d9dade;letter-spacing:0.112px;">Duration</div>
<div style="left:1340.0px;top:105px;line-height:0"><svg width="15" height="13" viewBox="0 0 15 13" ><path d="M1.2 1 H13.8 L9 6.8 V12 L6 10.4 V6.8 Z" fill="none" stroke="#c9cace" stroke-width="1.15" stroke-linejoin="round"/></svg></div>
<div style="left:1363px;top:95px;width:1px;height:33px;background:#45464b"></div>
<div class="t" style="left:1374.5px;top:101.20px;line-height:20px;font-size:15px;color:#d9dade;letter-spacing:0.152px;">Rules Modified</div>
<div style="left:1502px;top:105px;line-height:0"><svg width="15" height="13" viewBox="0 0 15 13" ><path d="M1.2 1 H13.8 L9 6.8 V12 L6 10.4 V6.8 Z" fill="none" stroke="#c9cace" stroke-width="1.15" stroke-linejoin="round"/></svg></div>
<div style="left:11px;top:481px;width:957px;height:7.8px;background:#36383e;border-radius:4px"></div>
<div style="left:11px;top:489.5px;width:1523px;height:1px;background:#44454a"></div>
<div style="left:11px;top:496px;width:1523px;height:1px;background:#44454a"></div>
<div style="left:765px;top:492.4px;width:24px;height:2px;background:#4b4d53;border-radius:1px"></div>
<div style="left:11px;top:545px;width:1523px;height:1px;background:#44454a"></div>
<div style="left:18px;top:506px;width:334px;height:40px;border:1px solid #44454a;border-bottom:none;box-sizing:border-box;background:#25262a"></div>
<div style="left:123px;top:506px;width:112px;height:40px;background:#1e1f22"></div>
<div style="left:122px;top:506px;width:1px;height:40px;background:#44454a"></div>
<div style="left:235px;top:506px;width:1px;height:40px;background:#44454a"></div>
<div style="left:123px;top:506px;width:112px;height:3.5px;background:#4484f5"></div>
<div style="left:123px;top:545px;width:112px;height:1px;background:#1e1f22"></div>
<div style="left:28.5px;top:519.5px;line-height:0"><svg width="14" height="13" viewBox="0 0 14 13" ><path d="M1 0.5 V12 H13.5 M3.6 3 H8 M3.6 6 H11 M3.6 9 H9.4" fill="none" stroke="#c9cacd" stroke-width="1.4" stroke-linecap="round" stroke-linejoin="round"/></svg></div>
<div class="t" style="left:48.5px;top:516.00px;line-height:20px;font-size:15px;color:#d9dade;letter-spacing:0.198px;">Overview</div>
<div style="left:133px;top:518.5px;line-height:0"><svg width="16" height="16" viewBox="0 0 16 16" ><path d="M1 8 C3 4.2 5.5 3 8 3 C10.5 3 13 4.2 15 8 C13 11.8 10.5 13 8 13 C5.5 13 3 11.8 1 8 Z" fill="none" stroke="#c3c4c8" stroke-width="1.3"/><circle cx="8" cy="8" r="2.2" fill="none" stroke="#c3c4c8" stroke-width="1.7"/></svg></div>
<div class="t" style="left:153.5px;top:516.00px;line-height:20px;font-size:15px;color:#d9dade;letter-spacing:0.215px;">Inspectors</div>
<div style="left:246.5px;top:519px;line-height:0"><svg width="11" height="14" viewBox="0 0 11 14" ><path d="M6.8 0.8 L1.2 8 H5.2 L4.2 13.2 L9.8 6 H5.8 Z" fill="none" stroke="#c9cacd" stroke-width="1.2" stroke-linejoin="round"/></svg></div>
<div class="t" style="left:263px;top:516.00px;line-height:20px;font-size:15px;color:#d9dade;letter-spacing:-0.252px;">Rules</div>
<div style="left:305px;top:517.5px;width:36px;height:18px;border:1px solid #5b5d64;border-radius:9px;box-sizing:border-box"></div>
<div style="left:307px;top:519.5px;width:14px;height:14px;background:#8f9198;border-radius:7px"></div>
<div class="t" style="left:20.7px;top:555.00px;line-height:20px;font-size:15px;color:#85878d;letter-spacing:-0.039px;">Request</div>
<div class="t" style="left:373.5px;top:555.00px;line-height:20px;font-size:15px;color:#85878d;letter-spacing:0.358px;">https://public-ubiservices.u...</div>
<div style="left:582px;top:553px;width:75px;height:24px;border:1px solid #676970;border-radius:12px;box-sizing:border-box"></div>
<div style="left:589.5px;top:559px;line-height:0"><svg width="12" height="12" viewBox="0 0 12 12" ><circle cx="6" cy="6" r="5.1" fill="none" stroke="#e25d58" stroke-width="1.4"/><path d="M6 3 V6.6" stroke="#e25d58" stroke-width="1.5" stroke-linecap="round"/><circle cx="6" cy="8.8" r="0.9" fill="#e25d58"/></svg></div>
<div class="t" style="left:607px;top:555.90px;line-height:20px;font-size:12px;color:#7f8187;letter-spacing:-0.062px;-webkit-text-stroke:0.3px #7f8187;">TLS 1.3</div>
<div style="left:661px;top:553px;width:61px;height:24px;border:1px solid #676970;border-radius:12px;box-sizing:border-box"></div>
<div class="t" style="left:669.2px;top:555.90px;line-height:20px;font-size:12px;color:#7f8187;letter-spacing:0.593px;-webkit-text-stroke:0.3px #7f8187;">HTTP/2</div>
<div style="left:727px;top:553px;width:41px;height:24px;border:1px solid #676970;border-radius:12px;box-sizing:border-box"></div>
<div class="t" style="left:735.5px;top:555.90px;line-height:20px;font-size:12px;color:#7f8187;letter-spacing:-0.057px;-webkit-text-stroke:0.3px #7f8187;">GET</div>
<div class="t" style="left:20.7px;top:591.00px;line-height:20px;font-size:15px;color:#d9dade;letter-spacing:0.046px;">Headers (20)</div>
<div class="t" style="left:128.2px;top:591.00px;line-height:20px;font-size:15px;color:#d9dade;letter-spacing:-0.434px;">Params (1)</div>
<div class="t" style="left:217px;top:591.00px;line-height:20px;font-size:15px;color:#d9dade;letter-spacing:0.009px;">Cookies (0)</div>
<div class="t" style="left:313.7px;top:591.00px;line-height:20px;font-size:15px;color:#d9dade;letter-spacing:-0.389px;">Raw</div>
<div class="t" style="left:362px;top:591.00px;line-height:20px;font-size:15px;color:#d9dade;letter-spacing:0.124px;">Body</div>
<div style="left:11px;top:617px;width:108px;height:3px;background:#4484f5"></div>
<div style="left:748px;top:594px;line-height:0"><svg width="14" height="14" viewBox="0 0 14 14" ><rect x="4.7" y="0.7" width="8.6" height="8.6" rx="1.6" fill="none" stroke="#c2c3c7" stroke-width="1.3"/><path d="M4.4 4.7 H2.3 Q0.7 4.7 0.7 6.3 V11.7 Q0.7 13.3 2.3 13.3 H7.7 Q9.3 13.3 9.3 11.7 V9.6" fill="none" stroke="#c2c3c7" stroke-width="1.3"/></svg></div>
<div style="left:11px;top:620px;width:766px;height:1px;background:#44454a"></div>
<div style="left:11px;top:621px;width:766px;height:33px;background:#25262a"></div>
<div style="left:11px;top:654px;width:766px;height:1px;background:#45464b"></div>
<div style="left:391px;top:621px;width:1px;height:33px;background:#45464b"></div>
<div class="t" style="left:20.7px;top:626.50px;line-height:20px;font-size:15px;color:#d9dade;letter-spacing:-0.086px;">Key</div>
<div class="t" style="left:401.2px;top:626.50px;line-height:20px;font-size:15px;color:#d9dade;letter-spacing:0.167px;">Value</div>
<div style="left:366.5px;top:630.5px;line-height:0"><svg width="15" height="13" viewBox="0 0 15 13" ><path d="M1.2 1 H13.8 L9 6.8 V12 L6 10.4 V6.8 Z" fill="none" stroke="#c9cace" stroke-width="1.15" stroke-linejoin="round"/></svg></div>
<div style="left:747px;top:630.5px;line-height:0"><svg width="15" height="13" viewBox="0 0 15 13" ><path d="M1.2 1 H13.8 L9 6.8 V12 L6 10.4 V6.8 Z" fill="none" stroke="#c9cace" stroke-width="1.15" stroke-linejoin="round"/></svg></div>
<div style="left:11px;top:654.6px;width:758px;height:33.6px;background:#1e1f22"></div>
<div class="t" style="left:20.7px;top:661.10px;line-height:20px;font-size:15px;color:#d9dade;letter-spacing:0.242px;">:method</div>
<div class="t" style="left:400px;top:661.10px;line-height:20px;font-size:15px;color:#d9dade;letter-spacing:-0.915px;">GET</div>
<div style="left:11px;top:688.2px;width:758px;height:33.6px;background:#26272b"></div>
<div class="t" style="left:20.7px;top:694.70px;line-height:20px;font-size:15px;color:#d9dade;letter-spacing:0.31px;">:authority</div>
<div class="t" style="left:400px;top:694.70px;line-height:20px;font-size:15px;color:#d9dade;letter-spacing:0.35px;">public-ubiservices.ubi.com</div>
<div style="left:11px;top:721.8px;width:758px;height:33.6px;background:#1e1f22"></div>
<div class="t" style="left:20.7px;top:728.30px;line-height:20px;font-size:15px;color:#d9dade;letter-spacing:0.228px;">:scheme</div>
<div class="t" style="left:400px;top:728.30px;line-height:20px;font-size:15px;color:#d9dade;letter-spacing:0.234px;">https</div>
<div style="left:11px;top:755.4px;width:758px;height:33.6px;background:#26272b"></div>
<div class="t" style="left:20.7px;top:761.90px;line-height:20px;font-size:15px;color:#d9dade;letter-spacing:0.265px;">:path</div>
<div class="t" style="left:400px;top:761.90px;line-height:20px;font-size:15px;color:#d9dade;letter-spacing:0.381px;">/v1/spaces/9cd2b60e-0111-4904-bb69-bbd9e930...</div>
<div style="left:11px;top:789.0px;width:758px;height:33.6px;background:#1e1f22"></div>
<div class="t" style="left:20.7px;top:795.50px;line-height:20px;font-size:15px;color:#d9dade;letter-spacing:0.605px;">sec-ch-ua</div>
<div class="t" style="left:400px;top:795.50px;line-height:20px;font-size:15px;color:#d9dade;letter-spacing:0.099px;">&quot;Chromium&quot;;v=&quot;111&quot;</div>
<div style="left:11px;top:822.6px;width:758px;height:33.6px;background:#26272b"></div>
<div class="t" style="left:20.7px;top:829.10px;line-height:20px;font-size:15px;color:#d9dade;letter-spacing:0.476px;">x-platform-appid</div>
<div class="t" style="left:400px;top:829.10px;line-height:20px;font-size:15px;color:#d9dade;letter-spacing:0.408px;">20adeb9c-6dad-404e-af1e-b12b4594e86e</div>
<div style="left:11px;top:856.2px;width:758px;height:33.6px;background:#1e1f22"></div>
<div class="t" style="left:20.7px;top:862.70px;line-height:20px;font-size:15px;color:#d9dade;">x-next</div>
<div class="t" style="left:400px;top:862.70px;line-height:20px;font-size:15px;color:#d9dade;"></div>
<div style="left:769px;top:655px;width:8px;height:200px;background:#2a2b2f"></div>
<div style="left:769.6px;top:655.5px;width:6.6px;height:58px;background:#3b3d43;border-radius:3.5px"></div>
<div style="left:777px;top:546px;width:1px;height:309px;background:#44454a"></div>
<div style="left:783px;top:546px;width:1px;height:309px;background:#44454a"></div>
<div style="left:778px;top:546px;width:5px;height:309px;background:#1e1f22"></div>
<div style="left:779.6px;top:688px;width:2px;height:24px;background:#4b4d53;border-radius:1px"></div>
<div class="t" style="left:794.5px;top:555.00px;line-height:20px;font-size:15px;color:#85878d;letter-spacing:-0.181px;">Response</div>
<div style="left:866px;top:553px;width:132px;height:24px;border:1px solid #676970;border-radius:12px;box-sizing:border-box"></div>
<div class="t" style="left:874.2px;top:555.90px;line-height:20px;font-size:12px;color:#7f8187;letter-spacing:0.042px;-webkit-text-stroke:0.3px #7f8187;">CERTIFICATE VALID</div>
<div style="left:1237px;top:553px;width:107px;height:24px;border:1px solid #676970;border-radius:12px;box-sizing:border-box"></div>
<div class="t" style="left:1245px;top:555.90px;line-height:20px;font-size:12px;color:#7f8187;letter-spacing:0.144px;-webkit-text-stroke:0.3px #7f8187;">BODY: 14.48 KB</div>
<div style="left:1349px;top:553px;width:75px;height:24px;border:1px solid #676970;border-radius:12px;box-sizing:border-box"></div>
<div style="left:1356.7px;top:559px;line-height:0"><svg width="12" height="12" viewBox="0 0 12 12" ><circle cx="6" cy="6" r="5.1" fill="none" stroke="#e25d58" stroke-width="1.4"/><path d="M6 3 V6.6" stroke="#e25d58" stroke-width="1.5" stroke-linecap="round"/><circle cx="6" cy="8.8" r="0.9" fill="#e25d58"/></svg></div>
<div class="t" style="left:1374.2px;top:555.90px;line-height:20px;font-size:12px;color:#7f8187;letter-spacing:-0.062px;-webkit-text-stroke:0.3px #7f8187;">TLS 1.2</div>
<div style="left:1428px;top:553px;width:61px;height:24px;border:1px solid #676970;border-radius:12px;box-sizing:border-box"></div>
<div class="t" style="left:1436.2px;top:555.90px;line-height:20px;font-size:12px;color:#7f8187;letter-spacing:0.593px;-webkit-text-stroke:0.3px #7f8187;">HTTP/2</div>
<div style="left:1494px;top:553px;width:50px;height:24px;border:1px solid #4caf50;border-radius:12px;box-sizing:border-box"></div>
<div class="t" style="left:1502.2px;top:555.90px;line-height:20px;font-size:12px;color:#4caf50;letter-spacing:0.656px;-webkit-text-stroke:0.3px #4caf50;">200</div>
<div class="t" style="left:794.5px;top:591.00px;line-height:20px;font-size:15px;color:#d9dade;letter-spacing:-0.287px;">Headers (15)</div>
<div class="t" style="left:898.7px;top:591.00px;line-height:20px;font-size:15px;color:#d9dade;letter-spacing:0.009px;">Cookies (0)</div>
<div class="t" style="left:995px;top:591.00px;line-height:20px;font-size:15px;color:#d9dade;letter-spacing:-0.389px;">Raw</div>
<div class="t" style="left:1043.5px;top:591.00px;line-height:20px;font-size:15px;color:#d9dade;letter-spacing:0.077px;">Preview</div>
<div class="t" style="left:1116px;top:591.00px;line-height:20px;font-size:15px;color:#d9dade;letter-spacing:0.124px;">Body</div>
<div style="left:1107px;top:617px;width:54px;height:3px;background:#4484f5"></div>
<div style="left:1359.2px;top:593px;line-height:0"><svg width="14" height="15" viewBox="0 0 14 15" ><path d="M0.8 7.5 H13.2 M3.5 0.8 L7 4.6 L10.5 0.8 M3.5 14.2 L7 10.4 L10.5 14.2" fill="none" stroke="#c2c3c7" stroke-width="1.3" stroke-linecap="round" stroke-linejoin="round"/></svg></div>
<div style="left:1383px;top:587px;width:28px;height:29px;background:#3d4150;border-radius:5px"></div>
<div style="left:1389px;top:594.5px;line-height:0"><svg width="16" height="13" viewBox="0 0 16 13" ><path d="M5.2 0.8 Q3 0.8 3 2.8 V4.6 Q3 6.5 1 6.5 Q3 6.5 3 8.4 V10.2 Q3 12.2 5.2 12.2 M10.8 0.8 Q13 0.8 13 2.8 V4.6 Q13 6.5 15 6.5 Q13 6.5 13 8.4 V10.2 Q13 12.2 10.8 12.2" fill="none" stroke="#c2c3c7" stroke-width="1.3" stroke-linecap="round" stroke-linejoin="round"/></svg></div>
<div style="left:1421.7px;top:594.5px;line-height:0"><svg width="13" height="13" viewBox="0 0 13 13" ><path d="M0.7 2 Q0.7 0.7 2 0.7 H9.3 L12.3 3.7 V11 Q12.3 12.3 11 12.3 H2 Q0.7 12.3 0.7 11 Z M3.3 0.9 V4 H8.6 V0.9" fill="none" stroke="#c2c3c7" stroke-width="1.3" stroke-linejoin="round"/><circle cx="6.5" cy="8.3" r="1.6" fill="#c2c3c7"/></svg></div>
<div style="left:1452.3px;top:594px;line-height:0"><svg width="15" height="13" viewBox="0 0 15 13" ><path d="M0.8 1.2 H14.2 M0.8 6 H11.4 Q14.2 6 14.2 8.4 Q14.2 10.8 11.4 10.8 H8.4 M10.4 8.6 L8.2 10.8 L10.4 13 M0.8 10.8 H5" fill="none" stroke="#c2c3c7" stroke-width="1.3" stroke-linecap="round" stroke-linejoin="round"/></svg></div>
<div style="left:1483px;top:594px;line-height:0"><svg width="14" height="14" viewBox="0 0 14 14" ><rect x="4.7" y="0.7" width="8.6" height="8.6" rx="1.6" fill="none" stroke="#c2c3c7" stroke-width="1.3"/><path d="M4.4 4.7 H2.3 Q0.7 4.7 0.7 6.3 V11.7 Q0.7 13.3 2.3 13.3 H7.7 Q9.3 13.3 9.3 11.7 V9.6" fill="none" stroke="#c2c3c7" stroke-width="1.3"/></svg></div>
<div style="left:1515px;top:594px;line-height:0"><svg width="15" height="15" viewBox="0 0 15 15" ><circle cx="6.2" cy="6.2" r="4.9" fill="none" stroke="#d5d6d9" stroke-width="1.5"/><path d="M9.9 9.9 L14 14" stroke="#d5d6d9" stroke-width="1.6" stroke-linecap="round"/></svg></div>
<div style="left:784px;top:620px;width:1523px;height:1px;background:#44454a"></div>
<div style="left:784px;top:621px;width:1523px;height:41px;background:#25262a"></div>
<div style="left:784px;top:661.5px;width:1523px;height:1px;background:#45464b"></div>
<div style="left:841.2px;top:626px;width:56px;height:31px;background:#3d4150;border-radius:5px"></div>
<div class="t" style="left:800px;top:631.50px;line-height:20px;font-size:15px;color:#d9dade;letter-spacing:0.396px;">Text</div>
<div class="t" style="left:850px;top:631.50px;line-height:20px;font-size:15px;color:#d9dade;letter-spacing:-0.166px;">JSON</div>
<div class="t" style="left:910.5px;top:631.50px;line-height:20px;font-size:15px;color:#d9dade;letter-spacing:-0.498px;">HEX</div>
<div class="t" style="left:960.7px;top:631.50px;line-height:20px;font-size:15px;color:#d9dade;letter-spacing:0.103px;">MessagePack</div>
<div class="t" style="left:1077px;top:631.50px;line-height:20px;font-size:15px;color:#d9dade;letter-spacing:0.152px;">XML</div>
<div class="t" style="left:1129.5px;top:631.50px;line-height:20px;font-size:15px;color:#d9dade;letter-spacing:0.227px;">JavaScript</div>
<div style="left:855.5px;top:663px;width:1523px;height:17.5px;border:1px solid #303136;box-sizing:border-box"></div>
<div class="m" style="left:784px;top:662.50px;width:39.3px;text-align:right;color:#c6c6c6">1</div>
<div class="m" style="left:855.5px;top:662.50px"><span style="color:#ffd700">{</span></div>
<div class="m" style="left:784px;top:681.72px;width:39.3px;text-align:right;color:#c6c6c6">2</div>
<div class="m" style="left:855.5px;top:681.72px"><span style="color:#9cdcfe">    &quot;parameters&quot;</span><span style="color:#d4d4d4">: </span><span style="color:#da70d6">{</span></div>
<div class="m" style="left:784px;top:700.94px;width:39.3px;text-align:right;color:#c6c6c6">3</div>
<div class="m" style="left:855.5px;top:700.94px"><span style="color:#9cdcfe">        &quot;us-sdkClientRemoteLogsGame&quot;</span><span style="color:#d4d4d4">: </span><span style="color:#179fff">{</span></div>
<div class="m" style="left:784px;top:720.16px;width:39.3px;text-align:right;color:#c6c6c6">4</div>
<div class="m" style="left:855.5px;top:720.16px"><span style="color:#9cdcfe">            &quot;fields&quot;</span><span style="color:#d4d4d4">: </span><span style="color:#ffd700">{</span></div>
<div class="m" style="left:784px;top:739.38px;width:39.3px;text-align:right;color:#c6c6c6">5</div>
<div class="m" style="left:855.5px;top:739.38px"><span style="color:#9cdcfe">                &quot;url&quot;</span><span style="color:#d4d4d4">: </span><span style="color:#ce9178">&quot;&quot;</span><span style="color:#d4d4d4">,</span></div>
<div class="m" style="left:784px;top:758.60px;width:39.3px;text-align:right;color:#c6c6c6">6</div>
<div class="m" style="left:855.5px;top:758.60px"><span style="color:#9cdcfe">                &quot;maxTextLength&quot;</span><span style="color:#d4d4d4">: </span><span style="color:#b5cea8">32768</span><span style="color:#d4d4d4">,</span></div>
<div class="m" style="left:784px;top:777.82px;width:39.3px;text-align:right;color:#c6c6c6">7</div>
<div class="m" style="left:855.5px;top:777.82px"><span style="color:#9cdcfe">                &quot;uncategorized&quot;</span><span style="color:#d4d4d4">: </span><span style="color:#ce9178">&quot;None&quot;</span></div>
<div class="m" style="left:784px;top:797.04px;width:39.3px;text-align:right;color:#c6c6c6">8</div>
<div class="m" style="left:855.5px;top:797.04px"><span style="color:#ffd700">            }</span><span style="color:#d4d4d4">,</span></div>
<div class="m" style="left:784px;top:816.26px;width:39.3px;text-align:right;color:#c6c6c6">9</div>
<div class="m" style="left:855.5px;top:816.26px"><span style="color:#9cdcfe">            &quot;relatedPopulation&quot;</span><span style="color:#d4d4d4">: </span><span style="color:#ffd700">{</span></div>
<div class="m" style="left:784px;top:835.48px;width:39.3px;text-align:right;color:#c6c6c6">10</div>
<div class="m" style="left:855.5px;top:835.48px"><span style="color:#9cdcfe">                &quot;name&quot;</span><span style="color:#d4d4d4">: </span><span style="color:#ce9178">&quot;AllLogsDisabled&quot;</span><span style="color:#d4d4d4">,</span></div>
<div style="left:855.5px;top:681px;width:1px;height:174px;background:#707277"></div>
<div style="left:887.2px;top:700px;width:1px;height:155px;background:#3b3c41"></div>
<div style="left:918.8px;top:719.5px;width:1px;height:135px;background:#3b3c41"></div>
<div style="left:950.4px;top:739px;width:1px;height:57.5px;background:#3b3c41"></div>
<div style="left:950.4px;top:835px;width:1px;height:20px;background:#3b3c41"></div>
<div style="left:0px;top:854px;width:1523px;height:10px;background:#1e1f22"></div>
<div style="left:0px;top:854px;width:1523px;height:1px;background:#4a4b50"></div>
<div style="left:7px;top:855px;width:1px;height:10px;background:#4a4b50"></div>
<div style="left:50px;top:855px;width:1px;height:10px;background:#4a4b50"></div>
<div style="left:638.5px;top:855px;width:1px;height:10px;background:#4a4b50"></div>
<div style="left:828px;top:855px;width:1px;height:10px;background:#4a4b50"></div>
<div style="left:1417px;top:855px;width:1px;height:10px;background:#4a4b50"></div>
<div style="left:1443.5px;top:855px;width:1px;height:10px;background:#4a4b50"></div>
<div style="left:1498px;top:855px;width:1px;height:10px;background:#4a4b50"></div>
<div class="t" style="left:33px;top:858.3px;font-size:15px;color:#d9dade">0</div>
<div class="t" style="left:648px;top:858.3px;font-size:15px;color:#d9dade">1 selected (Filter Applied)</div>
<div class="t" style="left:1452.5px;top:858.3px;font-size:15px;color:#d9dade">100%</div>
<div style="left:13px;top:861px;line-height:0"><svg width="11" height="12" viewBox="0 0 11 12" ><path d="M10 0.8 L1.5 6 L10 11.2 Z" fill="none" stroke="#c9cacd" stroke-width="1.3"/></svg></div>
<div style="left:1511px;top:861px;width:1.4px;height:5px;background:#c9cacd"></div>
<div style="left:5.8px;top:411px;line-height:0"><svg width="4" height="8" viewBox="0 0 4 8" ><path d="M4 0 L0 4 L4 8 Z" fill="#3a3c42"/></svg></div>
<div style="left:6.2px;top:431px;width:2.6px;height:24px;background:#3a3c42;border-radius:1px"></div>
</body></html>
